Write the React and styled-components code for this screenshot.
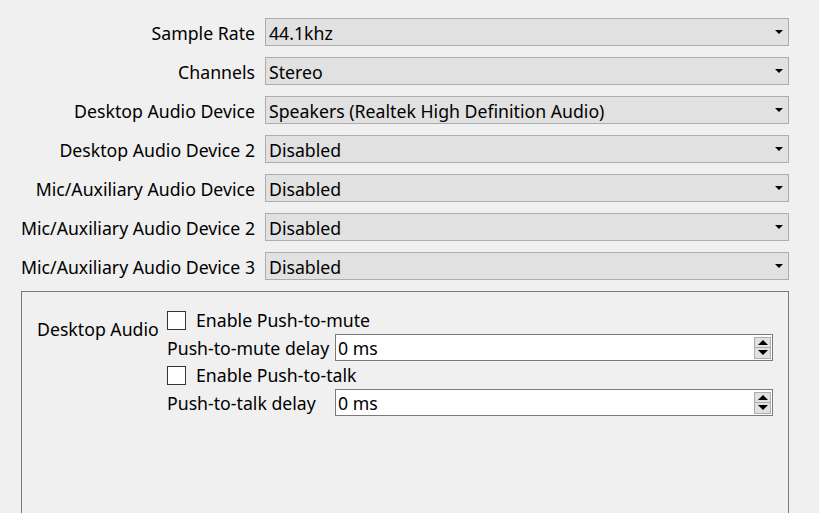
import React from 'react';
import styled, { createGlobalStyle } from 'styled-components';

const GlobalStyle = createGlobalStyle`
  html, body {
    margin: 0;
    background: #f0f0f0;
    overflow: hidden;
  }

  body {
    font-family: "Noto Sans", "Open Sans", sans-serif;
    font-size: 17.7px;
    color: #000;
  }
`;

const devices = [
  { label: 'Sample Rate', value: '44.1khz' },
  { label: 'Channels', value: 'Stereo' },
  { label: 'Desktop Audio Device', value: 'Speakers (Realtek High Definition Audio)' },
  { label: 'Desktop Audio Device 2', value: 'Disabled' },
  { label: 'Mic/Auxiliary Audio Device', value: 'Disabled' },
  { label: 'Mic/Auxiliary Audio Device 2', value: 'Disabled' },
  { label: 'Mic/Auxiliary Audio Device 3', value: 'Disabled' },
];

function Combo({ value }) {
  return (
    <StCombo>
      <span>{value}</span>
      <DropArrow />
    </StCombo>
  );
}

function SpinBox({ value }) {
  return (
    <StSpin>
      <span>{value}</span>
      <SpinButtons>
        <SpinButton>
          <Arrow $up />
        </SpinButton>
        <SpinButton>
          <Arrow />
        </SpinButton>
      </SpinButtons>
    </StSpin>
  );
}

function App() {
  return (
    <>
      <GlobalStyle />
      <Page>
        <Form>
          {devices.map((d) => (
            <React.Fragment key={d.label}>
              <Label>{d.label}</Label>
              <Combo value={d.value} />
            </React.Fragment>
          ))}
        </Form>
        <GroupBox>
          <GroupLabel>Desktop Audio</GroupLabel>
          <HotkeyForm>
            <CheckRow>
              <CheckBox />
              <span>Enable Push-to-mute</span>
            </CheckRow>
            <FieldLabel>Push-to-mute delay</FieldLabel>
            <SpinBox value="0 ms" />
            <CheckRow>
              <CheckBox />
              <span>Enable Push-to-talk</span>
            </CheckRow>
            <FieldLabel>Push-to-talk delay</FieldLabel>
            <SpinBox value="0 ms" />
          </HotkeyForm>
        </GroupBox>
      </Page>
    </>
  );
}

const Page = styled.div`
  height: 513px;
  box-sizing: border-box;
  overflow: hidden;
  display: flex;
  flex-direction: column;
  padding: 18px 30px 0 0;
`;

// 상단 오디오 장치 목록
const Form = styled.div`
  display: grid;
  grid-template-columns: 255px 1fr;
  column-gap: 10px;
  row-gap: 11px;
`;

const Label = styled.div`
  text-align: right;
  align-self: center;
  white-space: nowrap;
  line-height: 22px;
  padding-top: 1px;
`;

const StCombo = styled.div`
  height: 28px;
  box-sizing: border-box;
  display: flex;
  align-items: center;
  justify-content: space-between;
  padding: 1px 5px 0 3px;
  background: #e1e1e1;
  border: 1px solid #adadad;
  line-height: 22px;
  white-space: nowrap;
`;

const DropArrow = styled.div`
  width: 0;
  height: 0;
  border-left: 4px solid transparent;
  border-right: 4px solid transparent;
  border-top: 4px solid #000;
  margin-top: -1px;
`;

// 하단 그룹 박스
const GroupBox = styled.div`
  margin: 11px 0 0 21px;
  flex-shrink: 0;
  height: 240px;
  box-sizing: border-box;
  border: 1px solid #7a7a7a;
  padding: 16px 15px 0 15px;
  display: grid;
  grid-template-columns: 120px 1fr;
  column-gap: 10px;
  align-items: start;
`;

const GroupLabel = styled.div`
  padding-top: 10px;
  line-height: 22px;
  white-space: nowrap;
`;

const HotkeyForm = styled.div`
  display: grid;
  grid-template-columns: 162px 1fr;
  column-gap: 6px;
  row-gap: 2px;
`;

const CheckRow = styled.div`
  grid-column: 1 / -1;
  height: 24px;
  display: flex;
  align-items: center;
  gap: 10px;
  line-height: 22px;
`;

const CheckBox = styled.div`
  width: 19px;
  height: 19px;
  box-sizing: border-box;
  border: 1px solid #333;
  background: #fff;
`;

const FieldLabel = styled.div`
  align-self: center;
  line-height: 22px;
  white-space: nowrap;
`;

const StSpin = styled.div`
  height: 27px;
  box-sizing: border-box;
  display: flex;
  align-items: center;
  justify-content: space-between;
  padding: 0 1px 0 2px;
  background: #fff;
  border: 1px solid #7a7a7a;
  line-height: 22px;
`;

const SpinButtons = styled.div`
  display: flex;
  flex-direction: column;
  width: 17px;
`;

const SpinButton = styled.div`
  height: 11px;
  box-sizing: border-box;
  display: flex;
  align-items: center;
  justify-content: center;
  background: #e1e1e1;
  border: 1px solid #adadad;

  & + & {
    border-top: none;
  }
`;

const Arrow = styled.div`
  width: 0;
  height: 0;
  border-left: 5px solid transparent;
  border-right: 5px solid transparent;
  ${(p) => (p.$up ? 'border-bottom: 5px solid #000;' : 'border-top: 5px solid #000;')}
`;

export default App;
